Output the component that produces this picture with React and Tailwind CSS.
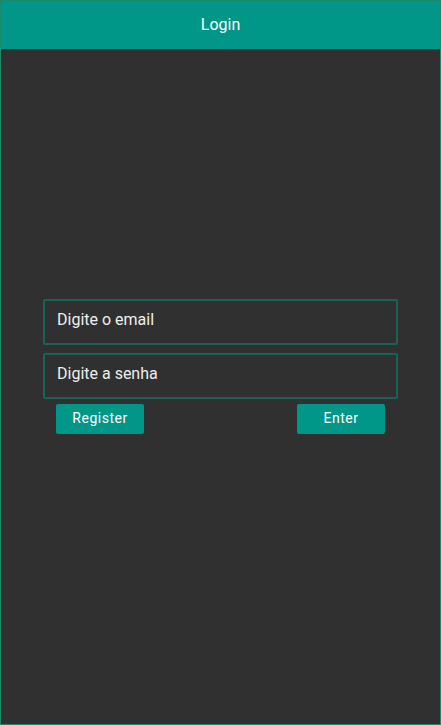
export default function App() {
    return (
        <div className="w-[441px] h-[725px] border border-[#1a8a6a] bg-[#303030] flex flex-col font-['Roboto',sans-serif]">
            <div className="h-[48px] bg-[#009688] flex items-center justify-center text-white text-[16px]">
                Login
            </div>
            <div className="flex-1 flex flex-col pt-[250px] px-[42px]">
                <div className="h-[46px] border-2 border-[#1c6159] rounded-[2px] flex items-center px-[12px] pb-[4px] text-[#eeeeee] text-[16px]">
                    Digite o email
                </div>
                <div className="h-[46px] mt-[8px] border-2 border-[#1c6159] rounded-[2px] flex items-center px-[12px] pb-[4px] text-[#eeeeee] text-[16px]">
                    Digite a senha
                </div>
                <div className="flex justify-between px-[13px] mt-[5px]">
                    <button className="w-[88px] h-[30px] pb-[2px] bg-[#009688] rounded-[2px] text-white text-[14px] tracking-[0.5px]">Register</button>
                    <button className="w-[88px] h-[30px] pb-[2px] bg-[#009688] rounded-[2px] text-white text-[14px] tracking-[0.5px]">Enter</button>
                </div>
            </div>
        </div>
    );
}
